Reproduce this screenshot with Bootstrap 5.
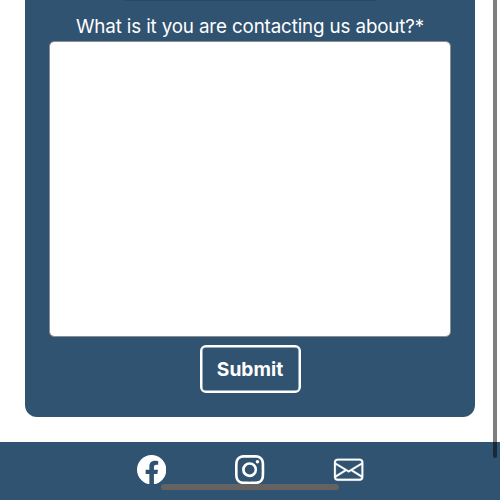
<!DOCTYPE html>
<html lang="en">
<head>
<meta charset="utf-8">
<meta name="viewport" content="width=device-width, initial-scale=1">
<title>Contact</title>
<link href="https://cdn.jsdelivr.net/npm/bootstrap@5.3.0/dist/css/bootstrap.min.css" rel="stylesheet">
<style>
  :root { --navy: #305371; }
  body { font-family: Inter, "Liberation Sans", sans-serif; background: #fff; }
  .screen { height: 500px; }
  .contact-panel { margin: 0 25px; height: 417px; background: var(--navy); border-radius: 0 0 12px 12px; padding: 0 24px; }
  /* lower edge of the field above */
  .previous-field { width: 252px; height: 1px; background: #2a4964; }
  .question { font-size: 18.8px; line-height: 24px; padding-top: 14px; height: 40px; letter-spacing: -.14px; }
  .message-box { height: 296px; border: 1px solid #8b8f94; border-radius: 5px; resize: none; padding: 8px; }
  .btn-send { width: 101px; height: 48px; margin-top: 8px; border: 2px solid #fff; box-shadow: inset 0 0 0 .5px #fff; border-radius: 6px; color: #fff; font-size: 19.2px; padding: 0; }
  .site-footer { height: 58px; background: var(--navy); gap: 69.3px; padding-top: 13px; }
  .site-footer svg { width: 29.3px; height: 29.3px; display: block; }
  .site-footer .envelope { stroke: currentColor; stroke-width: .14; overflow: visible; }
  .scroll-thumb { width: 4px; height: 458px; right: 3px; top: 0; background: rgba(0,0,0,.5); border-radius: 0 0 2px 2px; }
  .home-bar { width: 178px; height: 6px; left: 161px; top: 484px; background: #656361; border-radius: 3px; }
</style>
</head>
<body>
<div class="screen position-relative overflow-hidden d-flex flex-column justify-content-between">
  <form class="contact-panel text-center text-white">
    <div class="previous-field mx-auto"></div>
    <label class="question d-block" for="message"><span>What is it you are contacting us about?*</span></label>
    <textarea id="message" class="message-box form-control"></textarea>
    <button type="button" class="btn btn-send fw-bold">Submit</button>
  </form>
  <footer class="site-footer d-flex justify-content-center align-items-start">
    <a href="#" class="text-white" aria-label="Facebook"><svg viewBox="0 0 16 16" fill="currentColor"><path d="M16 8.049c0-4.446-3.582-8.05-8-8.05C3.58 0-.002 3.603-.002 8.05c0 4.017 2.926 7.347 6.75 7.951v-5.625h-2.03V8.05H6.75V6.275c0-2.017 1.195-3.131 3.022-3.131.876 0 1.791.157 1.791.157v1.98h-1.009c-.993 0-1.303.621-1.303 1.258v1.51h2.218l-.354 2.326H9.25V16c3.824-.604 6.75-3.934 6.75-7.951z"/></svg></a>
    <a href="#" class="text-white" aria-label="Instagram"><svg viewBox="0 0 16 16" fill="currentColor"><path d="M8 0C5.829 0 5.556.01 4.703.048 3.85.088 3.269.222 2.76.42a3.917 3.917 0 0 0-1.417.923A3.927 3.927 0 0 0 .42 2.76C.222 3.268.087 3.85.048 4.7.01 5.555 0 5.827 0 8.001c0 2.172.01 2.444.048 3.297.04.852.174 1.433.372 1.942.205.526.478.972.923 1.417.444.445.89.719 1.416.923.51.198 1.09.333 1.942.372C5.555 15.99 5.827 16 8 16s2.444-.01 3.298-.048c.851-.04 1.434-.174 1.943-.372a3.916 3.916 0 0 0 1.416-.923c.445-.445.718-.891.923-1.417.197-.509.332-1.09.372-1.942C15.99 10.445 16 10.173 16 8s-.01-2.445-.048-3.299c-.04-.851-.175-1.433-.372-1.941a3.926 3.926 0 0 0-.923-1.417A3.911 3.911 0 0 0 13.24.42c-.51-.198-1.092-.333-1.943-.372C10.443.01 10.172 0 7.998 0h.003zm-.717 1.442h.718c2.136 0 2.389.007 3.232.046.78.035 1.204.166 1.486.275.373.145.64.319.92.599.28.28.453.546.598.92.11.281.24.705.275 1.485.039.843.047 1.096.047 3.231s-.008 2.389-.047 3.232c-.035.78-.166 1.203-.275 1.485a2.47 2.47 0 0 1-.599.919c-.28.28-.546.453-.92.598-.28.11-.704.24-1.485.276-.843.038-1.096.047-3.232.047s-2.39-.009-3.233-.047c-.78-.036-1.203-.166-1.485-.276a2.478 2.478 0 0 1-.92-.598 2.48 2.48 0 0 1-.6-.92c-.109-.281-.24-.705-.275-1.485-.038-.843-.046-1.096-.046-3.233 0-2.136.008-2.388.046-3.231.036-.78.166-1.204.276-1.486.145-.373.319-.64.599-.92.28-.28.546-.453.92-.598.282-.11.705-.24 1.485-.276.738-.034 1.024-.044 2.515-.045v.002zm4.988 1.328a.96.96 0 1 0 0 1.92.96.96 0 0 0 0-1.92zm-4.27 1.122a4.109 4.109 0 1 0 0 8.217 4.109 4.109 0 0 0 0-8.217zm0 1.441a2.667 2.667 0 1 1 0 5.334 2.667 2.667 0 0 1 0-5.334z"/></svg></a>
    <a href="#" class="text-white" aria-label="Email"><svg class="envelope" viewBox="0 0 16 16" fill="currentColor"><path d="M0 4a2 2 0 0 1 2-2h12a2 2 0 0 1 2 2v8a2 2 0 0 1-2 2H2a2 2 0 0 1-2-2V4Zm2-1a1 1 0 0 0-1 1v.217l7 4.2 7-4.2V4a1 1 0 0 0-1-1H2Zm13 2.383-4.708 2.825L15 11.105V5.383Zm-.034 6.876-5.64-3.471L8 9.583l-1.326-.795-5.64 3.47A1 1 0 0 0 2 13h12a1 1 0 0 0 .966-.741ZM1 11.105l4.708-2.897L1 5.383v5.722Z"/></svg></a>
  </footer>
  <div class="scroll-thumb position-absolute"></div>
  <div class="home-bar position-absolute"></div>
</div>
<script src="https://cdn.jsdelivr.net/npm/bootstrap@5.3.0/dist/js/bootstrap.bundle.min.js"></script>
</body>
</html>
